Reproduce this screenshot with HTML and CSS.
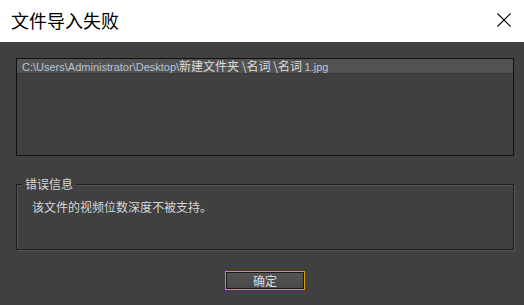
FILE: index.html
```html
<!DOCTYPE html>
<html lang="zh-CN">
<head>
    <meta charset="UTF-8">
    <title>文件导入失败</title>
    <link rel="stylesheet" href="styles.css">
</head>
<body>
    <div class="dialog">
        <!-- タイトルバー -->
        <div class="titlebar">
            <span class="title">文件导入失败</span>
            <svg class="close" width="14" height="14" viewBox="0 0 14 14">
                <path d="M0.5 0.5 L13.5 13.5 M13.5 0.5 L0.5 13.5" stroke="#000" stroke-width="1.1" fill="none"/>
            </svg>
        </div>

        <div class="content">
            <div class="file-list">
                <div class="file-row"><span class="latin">C:\Users\Administrator\Desktop\</span>新建文件夹 \名词 \名词 <span class="latin">1.jpg</span></div>
            </div>

            <div class="error-box">
                <span class="error-title">错误信息</span>
                <div class="error-text">该文件的视频位数深度不被支持。</div>
            </div>

            <div class="actions">
                <button type="button" class="ok-button">确定</button>
            </div>
        </div>
    </div>
</body>
</html>
```

FILE: styles.css
```css
/* 全体 */
body {
    margin: 0;
    padding: 0;
    width: 524px;
    height: 305px;
    overflow: hidden;
    font-family: "Noto Sans CJK SC", sans-serif;
    background-color: #404040;
}

.dialog {
    height: 305px;
    display: flex;
    flex-direction: column;
}

.titlebar {
    height: 42px;
    background-color: #fff;
    display: flex;
    align-items: center;
    justify-content: space-between;
    padding: 0 13px 0 11px;
    box-sizing: border-box;
}

.title {
    font-size: 18px;
    color: #000;
    margin-top: -2px;
}

.close {
    display: block;
    margin-top: -2px;
}

.content {
    padding: 16px 10px 0 16px;
}

.file-list {
    height: 98px;
    border: 1px solid #111;
    box-sizing: border-box;
}

.file-row {
    height: 14px;
    line-height: 14px;
    background-color: #525252;
    border-bottom: 1px solid #3a3a3a;
    padding-left: 5px;
    font-size: 12px;
    color: #dcdcdc;
    white-space: nowrap;
}

.file-row .latin {
    font-family: "Liberation Sans", sans-serif;
    font-size: 11px;
    color: #b9c4d6;
}

/* 错误信息グループ */
.error-box {
    position: relative;
    margin-top: 28px;
    height: 66px;
    box-sizing: border-box;
    border: 1px solid #1e1e1e;
    box-shadow: 1px 1px 0 #555, inset 1px 1px 0 #555;
    padding: 13px 0 0 15px;
}

.error-title {
    position: absolute;
    top: -9px;
    left: 5px;
    padding: 0 3px;
    background-color: #404040;
    font-size: 12px;
    line-height: 16px;
    color: #d6d6d6;
}

.error-text {
    font-size: 12px;
    line-height: 17px;
    color: #d6d6d6;
}

.actions {
    display: flex;
    justify-content: center;
    padding-top: 21px;
}

.ok-button {
    width: 80px;
    height: 19px;
    padding: 0;
    border: 1px solid #d79c00;
    box-shadow: inset 0 0 0 1px #1a1a1a;
    background: linear-gradient(#555, #484848);
    color: #dcdcdc;
    font-family: "Noto Sans CJK SC", sans-serif;
    font-size: 12px;
    line-height: 15px;
}
```
